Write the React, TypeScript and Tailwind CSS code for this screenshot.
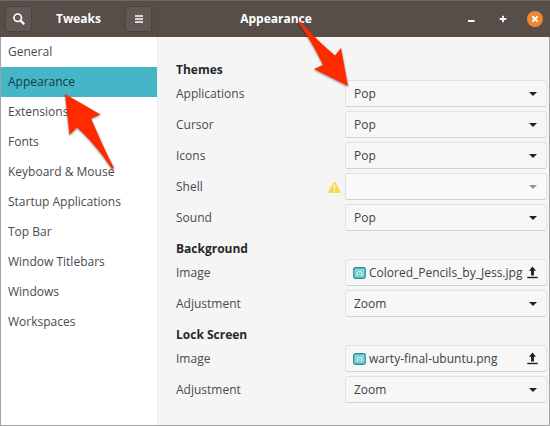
import { useState } from "react";

const pages = [
  "General",
  "Appearance",
  "Extensions",
  "Fonts",
  "Keyboard & Mouse",
  "Startup Applications",
  "Top Bar",
  "Window Titlebars",
  "Windows",
  "Workspaces",
];

type Setting = {
  label: string;
  value: string;
  kind?: "file";
  disabled?: boolean;
};

const sections: { title: string; settings: Setting[] }[] = [
  {
    title: "Themes",
    settings: [
      { label: "Applications", value: "Pop" },
      { label: "Cursor", value: "Pop" },
      { label: "Icons", value: "Pop" },
      { label: "Shell", value: "", disabled: true },
      { label: "Sound", value: "Pop" },
    ],
  },
  {
    title: "Background",
    settings: [
      { label: "Image", value: "Colored_Pencils_by_Jess.jpg", kind: "file" },
      { label: "Adjustment", value: "Zoom" },
    ],
  },
  {
    title: "Lock Screen",
    settings: [
      { label: "Image", value: "warty-final-ubuntu.png", kind: "file" },
      { label: "Adjustment", value: "Zoom" },
    ],
  },
];

function WarningIcon() {
  return (
    <svg width="13" height="12" viewBox="0 0 13 12" className="shrink-0">
      <path d="M6.5 0.8 12.4 11.4H0.6Z" fill="#f6d850" stroke="#f6d850" strokeLinejoin="round" />
      <path d="M6.5 3.6V8M6.5 9.2V10.4" stroke="#fffdf0" strokeWidth="1.4" />
    </svg>
  );
}

function PictureIcon() {
  return (
    <svg width="13" height="12" viewBox="0 0 13 12" className="shrink-0">
      <rect x="0.75" y="0.75" width="11.5" height="10.5" rx="1.8" fill="#8fdce3" stroke="#2b8d98" strokeWidth="1.3" />
      <path d="M3 4.2H4.6L5.3 3.2H7.7L8.4 4.2H10V8.9H3Z" fill="#d9f5f7" stroke="#4fb3be" strokeWidth="0.7" />
      <circle cx="6.5" cy="6.5" r="1.4" fill="#a9e4ea" stroke="#4fb3be" strokeWidth="0.8" />
    </svg>
  );
}

function UploadIcon() {
  return (
    <svg width="11" height="13" viewBox="0 0 11 13" className="shrink-0">
      <path d="M5.5 0.5 9 4.8H6.9V9.6H4.1V4.8H2Z" fill="#1c1c1c" />
      <path d="M0.3 11.5H10.7" stroke="#1c1c1c" strokeWidth="1.4" />
    </svg>
  );
}

function SettingRow({ id, setting }: { id: string; setting: Setting }) {
  const { label, value, kind, disabled } = setting;
  const frame = "h-[27px] w-full rounded-[3px] border border-[#e2e2e2] border-b-[#d2d2d2] text-left text-[#3d4247]";
  return (
    <div className="flex h-[27px] items-center">
      <label htmlFor={id} className="flex-1">
        {label}
      </label>
      {disabled && (
        <span className="mr-1">
          <WarningIcon />
        </span>
      )}
      <div className="relative w-[202px]">
        {kind === "file" ? (
          <button id={id} type="button" className={`${frame} flex items-center gap-[3px] bg-[#f7f7f7] pr-2 pl-[7px]`}>
            <PictureIcon />
            <span className="min-w-0 flex-1 whitespace-nowrap">{value}</span>
            <UploadIcon />
          </button>
        ) : (
          <>
            <select
              id={id}
              disabled={disabled}
              defaultValue={value}
              className={`${frame} appearance-none pl-2 ${disabled ? "bg-[#fafafa]" : "bg-[#f7f7f7]"}`}
            >
              <option>{value}</option>
            </select>
            <svg
              width="8"
              height="4"
              viewBox="0 0 8 4"
              className={`pointer-events-none absolute top-3 right-[10px] ${disabled ? "text-[#929292]" : "text-[#222]"}`}
            >
              <path d="M0 0H8L4 4Z" fill="currentColor" />
            </svg>
          </>
        )}
      </div>
    </div>
  );
}

export default function App() {
  const [page, setPage] = useState("Appearance");
  const headerButton =
    "flex h-[26px] w-[27px] items-center justify-center rounded-[3px] border border-[#4b433f] bg-[#625955]";

  return (
    <div className="flex min-h-screen flex-col bg-[#f5f5f5] font-['Open_Sans','Noto_Sans',sans-serif] text-[12px] leading-4 text-[#474b50]">
      <header className="flex h-[37px] border-t border-[#6e6662] bg-[#574e49] font-bold text-white">
        <div className="flex w-[158px] items-center justify-between border-r border-[#514844] px-[5px]">
          <button type="button" aria-label="Search" className={headerButton}>
            <svg width="12" height="12" viewBox="0 0 12 12" fill="none" stroke="#fff">
              <circle cx="4.7" cy="4.7" r="3.7" strokeWidth="1.7" />
              <path d="M7.4 7.4 11.2 11.2" strokeWidth="2.2" />
            </svg>
          </button>
          <h1>Tweaks</h1>
          <button type="button" aria-label="Menu" className={headerButton}>
            <svg width="8" height="8" viewBox="0 0 8 8" stroke="#fff">
              <path d="M0 1H8M0 4H8M0 7H8" strokeWidth="1.7" />
            </svg>
          </button>
        </div>
        <div className="flex flex-1 items-center">
          <h2 className="flex-1 text-center">{page}</h2>
          <div className="flex w-[156px] items-center justify-end gap-4 pr-[7px]">
            <button type="button" aria-label="Minimize" className="flex size-4 items-center justify-center">
              <svg width="8" height="8" viewBox="0 0 8 8">
                <path d="M1 6H7.5" stroke="#fff" strokeWidth="2" />
              </svg>
            </button>
            <button type="button" aria-label="Maximize" className="flex size-4 items-center justify-center">
              <svg width="8" height="8" viewBox="0 0 8 8">
                <path d="M4 0.7V7.3M0.7 4H7.3" stroke="#fff" strokeWidth="1.8" />
              </svg>
            </button>
            <button
              type="button"
              aria-label="Close"
              className="flex size-4 items-center justify-center rounded-full bg-[#ee8733]"
            >
              <svg width="8" height="8" viewBox="0 0 8 8">
                <path d="M1.4 1.4 6.6 6.6M6.6 1.4 1.4 6.6" stroke="#fff" strokeWidth="1.9" />
              </svg>
            </button>
          </div>
        </div>
      </header>

      <div className="flex flex-1 border-r border-b border-l border-[#a3a3a3]">
        <nav className="w-[157px] border-r border-[#ececec] bg-white">
          {pages.map((name) => (
            <button
              key={name}
              type="button"
              onClick={() => setPage(name)}
              className={`block h-[30px] w-full pl-[7px] text-left ${
                name === page ? "bg-[#45b6c5] text-[#123d49]" : ""
              }`}
            >
              {name}
            </button>
          ))}
        </nav>
        <main className="flex flex-1 flex-col gap-2 pt-[23px] pr-[2px] pl-[18px]">
          {sections.map(({ title, settings }) => (
            <section key={title}>
              <h3 className="h-[20px] leading-5 font-bold text-[#26282b]">{title}</h3>
              <div className="flex flex-col gap-1">
                {settings.map((setting) => (
                  <SettingRow key={setting.label} id={`${title}-${setting.label}`} setting={setting} />
                ))}
              </div>
            </section>
          ))}
        </main>
      </div>

      {/* Callout arrows laid over the window */}
      <svg
        width="360"
        height="180"
        viewBox="0 0 360 180"
        className="pointer-events-none absolute top-0 left-0 drop-shadow-[0_1px_1px_rgba(0,0,0,0.45)]"
        fill="#ff2a00"
      >
        <path d="M298 22 301 22C311 34 324 46 335 55.500L341 48 348 86 314 69 323 65C316 50 309 38 298 22Z" />
        <path d="M65 94 100.500 114.500 91 118.500C98 134 105 151 114 168L112 169C102 154 90 139 77 127.500L69.500 135Z" />
      </svg>
    </div>
  );
}
